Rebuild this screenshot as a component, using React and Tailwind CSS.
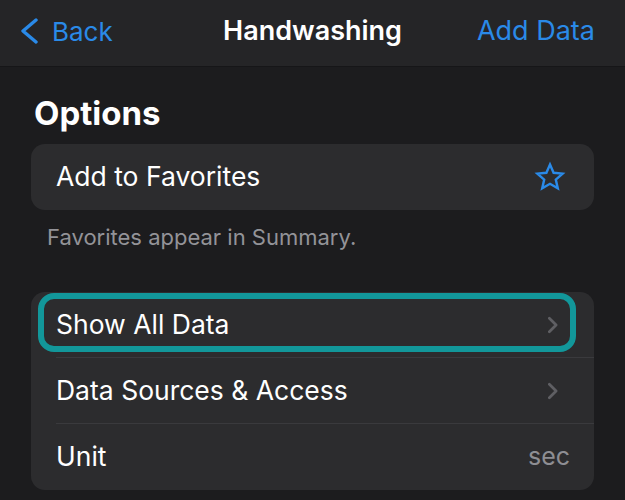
import React from 'react';

function Chevron({ className }) {
  return (
    <svg viewBox="0 0 12 20" className={className} fill="none" stroke="currentColor" strokeWidth="3" strokeLinecap="round" strokeLinejoin="round">
      <path d="M2.5 2.5l7.5 7.5-7.5 7.5" />
    </svg>
  );
}

function Row({ label, right, last, highlight }) {
  return (
    <div className="relative h-[66px] pl-[25px]">
      {highlight ? (
        <div className="absolute left-[7px] top-[1px] h-[59px] w-[538px] rounded-[16px] border-[6px] border-[#12979a]" />
      ) : null}
      <div className={`flex h-full items-center justify-between pr-[24px] ${last ? '' : 'border-b border-[#3a3a3d]'}`}>
        <span className="text-[26.5px] text-white">{label}</span>
        {right}
      </div>
    </div>
  );
}

export default function App() {
  return (
    <div className="h-[500px] w-[625px] overflow-hidden bg-[#1c1c1e] font-['Inter',sans-serif]">
      <div className="grid h-[67px] grid-cols-[1fr_auto_1fr] items-center border-b border-[#161618] bg-[#252527] px-[19px] pb-[4px]">
        <div className="flex items-center gap-[13px] text-[#2a8ae8]">
          <svg viewBox="0 0 20 26" className="h-[26px] w-[20px]" fill="none" stroke="currentColor" strokeWidth="3.4" strokeLinecap="round" strokeLinejoin="round">
            <path d="M17 2L4 13l13 11" />
          </svg>
          <span className="text-[26px]">Back</span>
        </div>
        <div className="text-[27px] font-semibold text-white">Handwashing</div>
        <div className="pr-[11px] text-right text-[27px] text-[#2a8ae8]">Add Data</div>
      </div>

      <div className="px-[31px]">
        <h1 className="mt-[26px] mb-[10px] pl-[3px] text-[33px] leading-[41px] font-bold text-white">Options</h1>

        <div className="flex h-[66px] items-center justify-between rounded-[14px] bg-[#2c2c2e] pl-[25px] pr-[28px]">
          <span className="text-[26.5px] text-white">Add to Favorites</span>
          <svg viewBox="0 0 32 32" className="h-[32px] w-[32px]" fill="none" stroke="#2a8ae8" strokeWidth="2.4" strokeLinejoin="miter">
            <path d="M16 3.5l3.6 8.3 9 .8-6.8 6 2 8.8L16 22.8l-7.8 4.6 2-8.8-6.8-6 9-.8z" />
          </svg>
        </div>

        <p className="mt-[14px] pl-[16px] text-[22px] leading-[26px] text-[#939398]">Favorites appear in Summary.</p>

        <div className="mt-[42px] overflow-hidden rounded-[14px] bg-[#2c2c2e]">
          <Row label="Show All Data" highlight right={<Chevron className="mr-[12px] h-[18px] w-[11px] text-[#5f5f63]" />} />
          <Row label="Data Sources & Access" right={<Chevron className="mr-[12px] h-[18px] w-[11px] text-[#5f5f63]" />} />
          <Row label="Unit" last right={<span className="text-[25px] text-[#8e8e93]">sec</span>} />
        </div>
      </div>
    </div>
  );
}
